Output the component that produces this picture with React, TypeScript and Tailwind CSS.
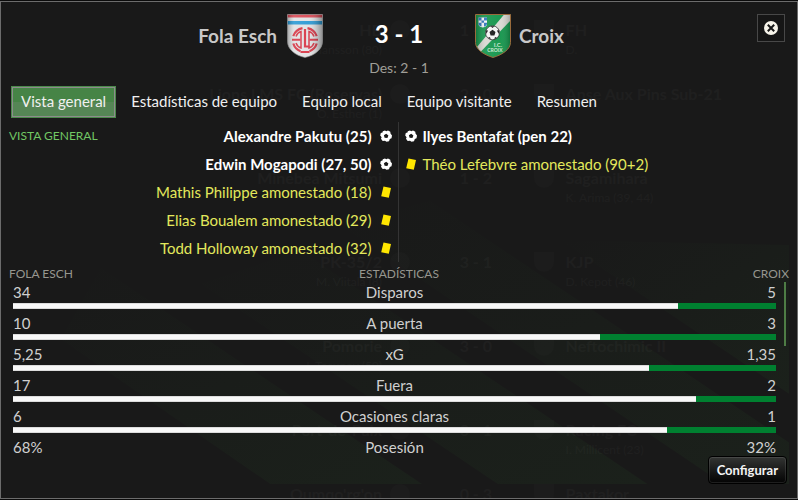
import { useState } from "react";

type EventKind = "goal" | "card";

interface MatchEvent {
  kind: EventKind;
  text: string;
}

interface Stat {
  label: string;
  home: string;
  away: string;
  share?: number;
}

const TABS = ["Vista general", "Estadísticas de equipo", "Equipo local", "Equipo visitante", "Resumen"];

const HOME_EVENTS: MatchEvent[] = [
  { kind: "goal", text: "Alexandre Pakutu (25)" },
  { kind: "goal", text: "Edwin Mogapodi (27, 50)" },
  { kind: "card", text: "Mathis Philippe amonestado (18)" },
  { kind: "card", text: "Elias Boualem amonestado (29)" },
  { kind: "card", text: "Todd Holloway amonestado (32)" },
];

const AWAY_EVENTS: MatchEvent[] = [
  { kind: "goal", text: "Ilyes Bentafat (pen 22)" },
  { kind: "card", text: "Théo Lefebvre amonestado (90+2)" },
];

const STATS: Stat[] = [
  { label: "Disparos", home: "34", away: "5", share: (34 / 39) * 100 },
  { label: "A puerta", home: "10", away: "3", share: (10 / 13) * 100 },
  { label: "xG", home: "5,25", away: "1,35", share: (5 / 6) * 100 },
  { label: "Fuera", home: "17", away: "2", share: (17 / 19) * 100 },
  { label: "Ocasiones claras", home: "6", away: "1", share: (6 / 7) * 100 },
  { label: "Posesión", home: "68%", away: "32%" },
];

// results list dimmed behind the dialog
const RESULTS = [
  { home: "HB", homeSub: "K. Hansson (80)", score: "1 - 1", away: "FH", awaySub: "D.", tall: false },
  { home: "Lions LMS FC (Reservas)", homeSub: "O. Esther (1)", score: "2 - 0", away: "Anse Aux Pins Sub-21", awaySub: "", tall: true },
  { home: "Minebea Mitsumi", homeSub: "", score: "1 - 2", away: "Sagamihara", awaySub: "K. Arima (39, 44)", tall: true },
  { home: "PK-35/2", homeSub: "M. Viitala (8)", score: "3 - 1", away: "KJP", awaySub: "D. Kepot (46)", tall: true },
  { home: "Pomorie", homeSub: "I. Tosunov (50)", score: "3 - 0", away: "Neftochimic II", awaySub: "", tall: true },
  { home: "Port-de-Paix", homeSub: "", score: "0 - 1", away: "Racing FC", awaySub: "I. Millicent (23)", tall: false },
  { home: "Qumqo'rg'on", homeSub: "", score: "0 - 3", away: "Paxtakor", awaySub: "", tall: false },
];

function Backdrop() {
  return (
    <div aria-hidden="true" className="pointer-events-none absolute inset-0 overflow-hidden">
      <svg className="absolute inset-0 h-full w-full" viewBox="0 0 798 500" preserveAspectRatio="none">
        <defs>
          <linearGradient id="stripes" x1="0" x2="1" y1="0" y2="1">
            <stop offset="0" stopColor="#1b211b" stopOpacity="0" />
            <stop offset="1" stopColor="#1b211b" />
          </linearGradient>
        </defs>
        <g fill="url(#stripes)">
          <path d="M422 486H270L60 340 100 268z" />
          <path d="M498 486h150L300 250 200 284z" />
          <path d="M724 486h66v-42L430 200l-90 25z" />
          <path d="M790 395 560 240l230 5z" />
        </g>
      </svg>
      <div className="relative flex flex-col pt-[18px] text-white opacity-[0.022]">
        {RESULTS.map((r) => (
          <div
            key={r.home}
            className={`grid shrink-0 grid-cols-[382fr_36fr_116fr_32fr_232fr] items-start ${r.tall ? "h-21" : "h-16"}`}
          >
            <div className="text-right">
              <div className="text-base leading-5 font-bold">{r.home}</div>
              <div className="text-xs leading-5">{r.homeSub}</div>
            </div>
            <span className="mx-auto h-5 w-5 rounded-full bg-white/50" />
            <span className="text-center text-base leading-5 font-bold">{r.score}</span>
            <span className="h-5 w-5 rounded-b-full bg-white/50" />
            <div>
              <div className="text-base leading-5 font-bold">{r.away}</div>
              <div className="text-xs leading-5">{r.awaySub}</div>
            </div>
          </div>
        ))}
      </div>
    </div>
  );
}

function HomeCrest() {
  return (
    <svg className="h-11 w-9 shrink-0" viewBox="0 0 36 44" aria-hidden="true">
      <defs>
        <linearGradient id="homeShade" x1="0" x2="1" y1="0" y2="0">
          <stop offset="0" stopColor="#000" stopOpacity=".3" />
          <stop offset=".2" stopColor="#fff" stopOpacity=".15" />
          <stop offset=".6" stopColor="#fff" stopOpacity=".1" />
          <stop offset="1" stopColor="#000" stopOpacity=".4" />
        </linearGradient>
        <clipPath id="homeShape">
          <path d="M.5.5h35v27C35.5 35 28 41.500 18 43.500 8 41.500.5 35 .5 27.500z" />
        </clipPath>
      </defs>
      <g clipPath="url(#homeShape)">
        <path fill="#dfe0e2" d="M0 0h36v44H0z" />
        <path fill="#d8404c" d="M0 0h36v3.500H0z" />
        <path fill="#2094d2" d="M0 7h36v3.500H0z" />
        <g fill="none" stroke="#d52c3c">
          <path
            strokeWidth="2.200"
            d="M15.500 14.200a12 12 0 0 0-9.200 8M20.500 14.200a12 12 0 0 1 9.200 8M6.300 29.500a12 12 0 0 0 7.200 7.700M29.700 29.500a12 12 0 0 1-7.200 7.700"
          />
          <path strokeWidth="2" d="M5 25.800h8.500M22.500 25.800H31" />
          <path strokeWidth="1.500" d="M9 22.500c1-3 2.500-4.300 5-5v16.500c-2.500-.7-4-2.300-5-5M27 22.500c-1-3-2.500-4.300-5-5v16.500c2.500-.7 4-2.300 5-5" />
          <path strokeWidth="2.200" d="M18 15v17.500h4.500M13.500 38h9" />
        </g>
        <path fill="url(#homeShade)" d="M0 0h36v44H0z" />
      </g>
      <path d="M.5.5h35v27C35.5 35 28 41.500 18 43.500 8 41.500.5 35 .5 27.500z" fill="none" stroke="#8d8d8d" strokeOpacity=".6" />
    </svg>
  );
}

function AwayCrest() {
  return (
    <svg className="h-11 w-9 shrink-0" viewBox="0 0 36 44" aria-hidden="true">
      <defs>
        <linearGradient id="awayShade" x1="0" x2="1" y1="0" y2="0">
          <stop offset="0" stopColor="#000" stopOpacity=".25" />
          <stop offset=".3" stopColor="#fff" stopOpacity=".1" />
          <stop offset=".7" stopColor="#fff" stopOpacity=".05" />
          <stop offset="1" stopColor="#000" stopOpacity=".25" />
        </linearGradient>
        <clipPath id="awayShape">
          <path d="M.5.5h35v28C35.5 35 28 40.500 18 43.500 8 40.500.5 35 .5 28.500z" />
        </clipPath>
      </defs>
      <g clipPath="url(#awayShape)">
        <path fill="#109449" d="M0 0h36v44H0z" />
        <path fill="#d8d8d2" d="M29.500 0H36v6L5.500 38 2 33z" />
        <path fill="#f4f6f8" d="M3.500 3.500h8.500v6.500q0 2.500-4.250 3.500Q3.500 12.500 3.500 10z" />
        <path fill="#2a70b8" d="M3.500 3.500h3v3h-3zM9 3.500h3v3H9zM3.500 8.800h3v3.800q-3-1-3-2.600zM9 8.800h3V10q0 1.700-3 2.800zM6.500 6.500H9v2.300H6.500z" />
        <circle cx="17.500" cy="18.800" r="7" fill="#f4f4f4" stroke="#222" strokeWidth=".8" />
        <g fill="#151515">
          <path d="m17.500 15.800 3 2.200-1.100 3.500h-3.800L14.500 18zM15.500 12.200h4l-2 1.700zM10.800 16.200l2.300.2-1.800 3.500zM24.200 16.200l-2.300.2 1.800 3.500zM13 23.700l2-.7.7 2.500zM22 23.700l-2-.7-.7 2.500z" />
        </g>
        <text x="23" y="33" fill="#c9e6d0" fontSize="6" textAnchor="middle">I.C.</text>
        <text x="20" y="38" fill="#c9e6d0" fontSize="5" textAnchor="middle">CROIX</text>
        <path fill="url(#awayShade)" d="M0 0h36v44H0z" />
      </g>
      <path d="M.5.5h35v28C35.5 35 28 40.500 18 43.500 8 40.500.5 35 .5 28.500z" fill="none" stroke="#9a6b3c" />
    </svg>
  );
}

function EventIcon({ kind }: { kind: EventKind }) {
  if (kind === "card") {
    return (
      <svg className="h-3 w-3 shrink-0" viewBox="0 0 12 12" aria-hidden="true">
        <path d="M3.500.5 11 2 8.800 11.800 1.200 10.300z" fill="#ffe600" />
      </svg>
    );
  }
  return (
    <svg className="h-3 w-3 shrink-0" viewBox="0 0 12 12" aria-hidden="true">
      <path
        fill="#fff"
        fillRule="evenodd"
        d="M2.800 1.200 5 .5l1.200.8L8 .5l2.300 1.300.2 1.800L12 5.500l-.5 2.800-1.700.7-.8 2.200-2.500.6L5 10.800l-2.300.3L1 8.800l.6-1.600L.2 5.500.8 3l1.700-.4zM6.200 3.800 3.900 5.300l.7 2.500 2.800.2 1-2.500z"
      />
    </svg>
  );
}

function EventList({ events, side }: { events: MatchEvent[]; side: "home" | "away" }) {
  return (
    <ul className="min-w-0 flex-1">
      {events.map((e) => (
        <li
          key={e.text}
          className={`flex h-7 items-center ${side === "home" ? "flex-row-reverse gap-2 pr-1.5" : "gap-1.5 pl-1.5"} ${
            e.kind === "goal" ? "font-bold text-white" : "text-[#e3e85c]"
          }`}
        >
          <EventIcon kind={e.kind} />
          {e.text}
        </li>
      ))}
    </ul>
  );
}

function StatRow({ stat }: { stat: Stat }) {
  return (
    <div className="h-[31px]">
      <div className="grid h-[21px] grid-cols-[1fr_auto_1fr] items-start text-[#d0d0d0]">
        <span>{stat.home}</span>
        <span>{stat.label}</span>
        <span className="text-right">{stat.away}</span>
      </div>
      {stat.share !== undefined && (
        <div className="flex h-1.5 bg-[#008030]">
          <div className="border-y border-[#dcdcdc] bg-[#f8f8f8]" style={{ width: `${stat.share}%` }} />
        </div>
      )}
    </div>
  );
}

export default function App() {
  const [tab, setTab] = useState(TABS[0]);

  return (
    <div className="min-h-screen bg-[#0b0b0b] pt-px pb-px font-['Lato',sans-serif] text-[15px] leading-5">
      <main className="relative flex min-h-[calc(100vh-2px)] flex-col border border-[#6c6c6c] bg-[#191919]">
        <Backdrop />

        <header className="relative grid grid-cols-[1fr_152px_1fr] pt-3">
          <div className="flex h-11 items-center justify-end gap-2.5 text-[19px] font-bold text-[#c8c8c8]">
            <h2>Fola Esch</h2>
            <HomeCrest />
          </div>
          <div className="text-center">
            <h1 className="flex h-10 items-center justify-center text-2xl font-bold text-white">3 - 1</h1>
            <p className="mt-1 text-sm text-[#a09f98]">Des: 2 - 1</p>
          </div>
          <div className="flex h-11 items-center gap-2 text-[19px] font-bold text-[#c8c8c8]">
            <AwayCrest />
            <h2>Croix</h2>
          </div>
          <button
            type="button"
            aria-label="Cerrar"
            className="absolute top-3 right-3 flex h-7 w-7 items-center justify-center border border-[#484848] bg-[#161616]"
          >
            <svg className="h-3.5 w-3.5" viewBox="0 0 14 14">
              <circle cx="7" cy="7" r="7" fill="#f7f4ea" />
              <path d="m3.800 3.800 6.400 6.400M10.200 3.800l-6.400 6.400" stroke="#171717" strokeWidth="2" />
            </svg>
          </button>
        </header>

        <nav className="relative mt-2 flex gap-[5px] px-2.5">
          {TABS.map((t) => (
            <button
              key={t}
              type="button"
              onClick={() => setTab(t)}
              className={`h-8 border px-[9px] pb-0.5 whitespace-nowrap text-[#f0f0f0] ${
                t === tab
                  ? "border-[#4b8a4b] bg-linear-to-b from-[#468446] from-50% to-[#558655] to-50% inset-ring inset-ring-[#8c8c8c]"
                  : "border-transparent"
              }`}
            >
              {t}
            </button>
          ))}
        </nav>

        <section className="relative mt-1 flex pr-0.5">
          <h3 className="absolute top-1.5 left-2 text-xs text-[#72c764]">VISTA GENERAL</h3>
          <EventList events={HOME_EVENTS} side="home" />
          <div className="w-px bg-[#343434]" />
          <EventList events={AWAY_EVENTS} side="away" />
        </section>

        <section className="relative mt-0.5">
          <div className="grid h-[18px] grid-cols-[1fr_auto_1fr] items-end px-2 text-xs text-[#96968f]">
            <h3>FOLA ESCH</h3>
            <h3>ESTADÍSTICAS</h3>
            <h3 className="text-right">CROIX</h3>
          </div>
          <div className="flex gap-2 pr-[11px] pl-3">
            <div className="min-w-0 flex-1">
              {STATS.map((s) => (
                <StatRow key={s.label} stat={s} />
              ))}
            </div>
            <div className="h-16 w-0.5 bg-[#4e7d45]" />
          </div>
        </section>

        <footer className="absolute right-2.5 bottom-3.5">
          <button
            type="button"
            className="h-7 rounded-sm border border-black bg-linear-to-b from-[#333533] to-[#050505] px-2 text-[13px] font-bold text-[#f4f4f4] inset-ring inset-ring-white/10"
          >
            Configurar
          </button>
        </footer>
      </main>
    </div>
  );
}
